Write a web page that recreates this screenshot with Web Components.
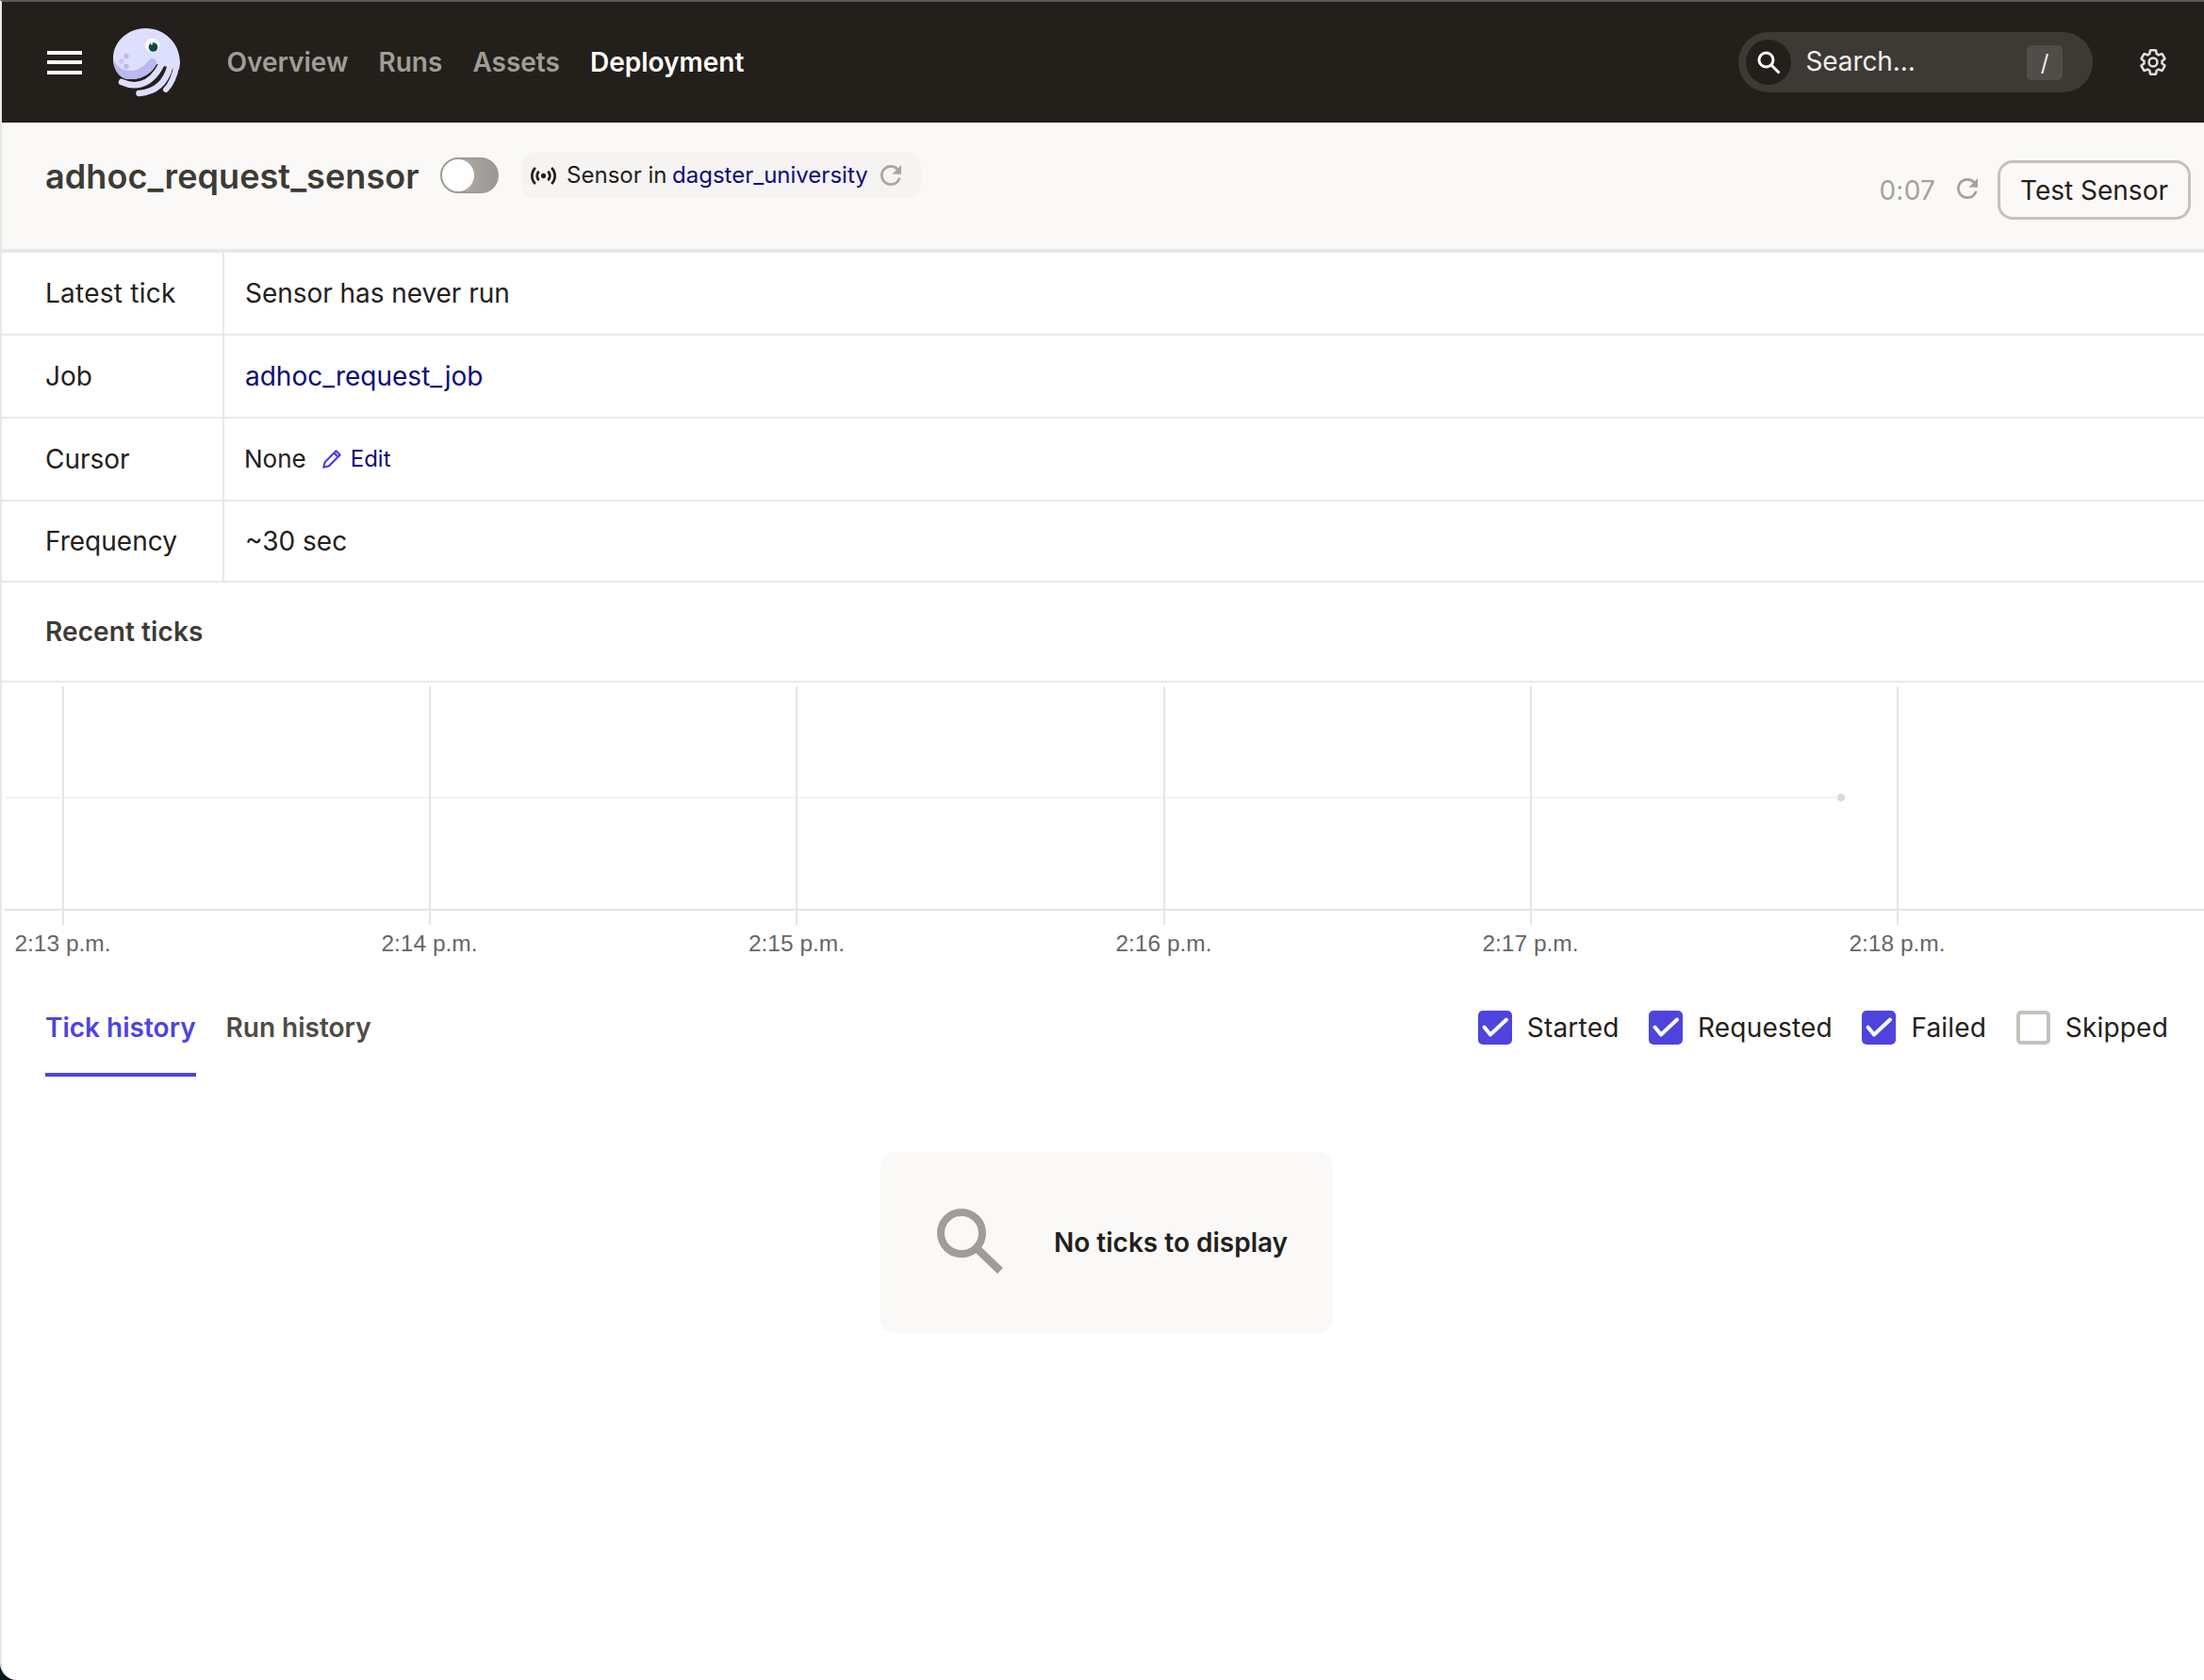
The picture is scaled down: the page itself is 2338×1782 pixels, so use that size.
<!DOCTYPE html>
<html><head><meta charset="utf-8"><title>adhoc_request_sensor</title>
<style>
html,body{margin:0;padding:0;background:#04191c;height:100%;}
body{font-family:Inter,"Noto Sans",sans-serif;font-size:28px;color:#23201b;overflow:hidden;}
</style></head><body>
<app-frame>
  <top-nav></top-nav>
  <page-header></page-header>
  <meta-table></meta-table>
  <section-title>Recent ticks</section-title>
  <tick-chart></tick-chart>
  <tick-tabs></tick-tabs>
  <empty-card>No ticks to display</empty-card>
</app-frame>
<script>
function def(name, html){
  customElements.define(name, class extends HTMLElement{
    constructor(){super();this.attachShadow({mode:'open'}).innerHTML=html;}
  });
}
const REFRESH='M17.65 6.35A7.958 7.958 0 0 0 12 4c-4.42 0-7.99 3.58-7.99 8s3.57 8 7.99 8c3.73 0 6.84-2.55 7.73-6h-2.08A5.99 5.99 0 0 1 12 18c-3.31 0-6-2.69-6-6s2.69-6 6-6c1.66 0 3.14.69 4.22 1.78L13 11h7V4l-2.35 2.35z';
def('app-frame',`<style>:host{display:block;box-sizing:border-box;width:2338px;height:1782px;background:#fff;border-top:2px solid #5c5a5a;border-left:2px solid #e8e8e8;border-bottom-left-radius:18px;overflow:hidden;}</style><slot></slot>`);
def('icon-logo',`<style>:host{display:block;width:72px;height:74px;flex:none;}svg{display:block;width:100%;height:100%}</style>
<svg viewBox="20 20 72 74" fill="none">
<path d="M54 20C75 20 91 36 91 57L90 64 66 58C62 66 52 75 36 74 26 73 20 63 20 52 20 34 36 20 54 20Z" fill="#dedeff"/>
<path d="M20 52C20 63 26 73 36 74 52 75 62 66 66 58 67 54 63 50 59 53 54 58 50 64 40 65 30 66 23 60 20 52Z" fill="#bcb8f0"/>
<path d="M29 77C40 82 58 84 71 59" stroke="#dedeff" stroke-width="6.500" stroke-linecap="round"/>
<path d="M47.500 89C60 88 75 82 80.500 60" stroke="#dedeff" stroke-width="6.500" stroke-linecap="round"/>
<path d="M76 85C81 80 86 70 87 60" stroke="#dedeff" stroke-width="6" stroke-linecap="round"/>
<ellipse cx="61.500" cy="38" rx="7.800" ry="7.200" fill="#fff"/><circle cx="62.500" cy="40" r="4.800" fill="#0f4a48"/><circle cx="61" cy="36.500" r="1.100" fill="#fff"/>
<circle cx="34" cy="49.500" r="2.700" fill="#bcb8f0"/><circle cx="29" cy="55" r="2.700" fill="#c9c6f5"/><circle cx="34" cy="60.500" r="2.700" fill="#bcb8f0"/></svg>`);
def('top-nav',`<style>
:host{display:flex;align-items:center;height:128px;background:#23201b;margin-left:-2px;border-left:2px solid #5c5a5a;box-sizing:border-box;font-family:Inter,sans-serif;}
.burger{display:flex;flex-direction:column;gap:6.500px;margin-left:48px;width:37px;flex:none;}
.burger i{display:block;height:4px;background:#fff;}
icon-logo{margin-left:33px;margin-top:2px}
nav{display:flex;gap:32px;margin-left:48.500px;font-size:28px;font-weight:600;color:#a19d98;}
nav span{white-space:nowrap}
nav .on{color:#fff}
.sp{flex:1}
.search{display:flex;align-items:center;width:376px;height:64px;border-radius:32px;background:#3d3a35;box-sizing:border-box;padding-left:8px;color:#f0efed;font-size:28px;}
.circle{width:48px;height:48px;border-radius:50%;background:#23201b;display:flex;align-items:center;justify-content:center;flex:none;}
.txt{margin-left:15.500px;flex:1;margin-top:-2px;letter-spacing:-.1px}
.key{width:38px;height:37px;border-radius:5px;background:#514d48;display:flex;align-items:center;justify-content:center;margin-right:32px;font-size:24px;font-weight:400}
.gear{margin-left:50px;margin-right:40px;width:28px;height:28px;display:block;margin-top:-1px;flex:none}
</style>
<div class="burger"><i></i><i></i><i></i></div>
<icon-logo></icon-logo>
<nav><span>Overview</span><span>Runs</span><span>Assets</span><span class="on">Deployment</span></nav>
<div class="sp"></div>
<div class="search"><div class="circle"><svg width="28" height="28" viewBox="0 0 28 28" fill="none" stroke="#fff" stroke-width="3"><circle cx="11.500" cy="11.500" r="7.500"/><path d="M17 17l8.500 8.500"/></svg></div><div class="txt">Search...</div><div class="key">/</div></div>
<svg class="gear" viewBox="1 1 22 22" fill="none" stroke="#e2e0dc" stroke-width="2" stroke-linejoin="round"><path d="M19.430 12.980c.04-.32.07-.64.07-.98 0-.34-.03-.66-.07-.98l2.110-1.650c.19-.15.24-.42.12-.64l-2-3.460c-.12-.22-.39-.3-.61-.22l-2.490 1c-.52-.4-1.080-.73-1.690-.98l-.38-2.650C14.460 2.180 14.250 2 14 2h-4c-.25 0-.46.18-.49.42l-.38 2.650c-.61.25-1.170.59-1.690.98l-2.490-1c-.23-.09-.49 0-.61.22l-2 3.460c-.13.22-.07.49.12.64l2.110 1.650c-.04.32-.07.65-.07.98 0 .33.03.66.07.98l-2.110 1.650c-.19.15-.24.42-.12.64l2 3.460c.12.22.39.3.61.22l2.490-1c.52.4 1.080.73 1.690.98l.38 2.650c.03.24.24.42.49.42h4c.25 0 .46-.18.49-.42l.38-2.650c.61-.25 1.170-.59 1.690-.98l2.490 1c.23.09.49 0 .61-.22l2-3.460c.12-.22.07-.49-.12-.64l-2.110-1.650z"/><circle cx="12" cy="12" r="3.500"/></svg>`);
def('page-header',`<style>
:host{display:flex;align-items:flex-start;height:138px;box-sizing:border-box;background:#faf9f7;border-bottom:4px solid #e8e8e8;font-family:Inter,sans-serif;}
h1{margin:0;margin-left:46px;margin-top:33px;font-size:36px;line-height:48px;font-weight:600;color:#3d3a36;white-space:nowrap;letter-spacing:.07px}
.toggle{box-sizing:border-box;width:62px;height:38px;border-radius:19px;background:linear-gradient(90deg,#b8b5b0,#9a9691);border:2px solid #9e9a95;margin-left:22.500px;margin-top:37px;flex:none}
.toggle i{display:block;width:34px;height:34px;border-radius:50%;background:#fff}
.tag{display:flex;align-items:center;height:48px;background:#f5f4f2;border-radius:14px;margin-left:23.500px;margin-top:32px;padding:0 21px 0 10px;font-size:24px;color:#23201b;white-space:nowrap}
.tag a,.tag span{position:relative;top:-1px}
.tag a{color:#0c0c7a;margin-left:5.500px}
.tag svg{flex:none;display:block}
.sp{flex:1}
.right{display:flex;align-items:center;margin-top:40px;margin-right:14px}
.t{font-size:28px;color:#a5a29d;letter-spacing:.2px}
.rf{margin-left:23px;margin-right:21px;margin-top:-3px;display:block}
button{font:400 28px Inter,sans-serif;color:#23201b;background:transparent;box-sizing:border-box;height:63px;width:205px;border:3px solid #c4c1bc;border-radius:16px;padding:0;}
</style>
<h1>adhoc_request_sensor</h1><div class="toggle"><i></i></div>
<div class="tag"><svg width="27" height="19" viewBox="2 4.900 20 14.200" preserveAspectRatio="none" fill="#23201b"><path d="M7.760 16.240C6.670 15.160 6 13.660 6 12s.67-3.160 1.760-4.240l1.420 1.420C8.450 9.900 8 10.900 8 12c0 1.100.45 2.100 1.170 2.830l-1.410 1.410zm8.480 0C17.330 15.160 18 13.660 18 12s-.67-3.160-1.760-4.240l-1.420 1.420C15.550 9.900 16 10.900 16 12c0 1.100-.45 2.100-1.170 2.830l1.410 1.410zM12 10c-1.100 0-2 .9-2 2s.9 2 2 2 2-.9 2-2-.9-2-2-2zm8 2c0 2.210-.9 4.210-2.350 5.650l1.420 1.420C20.880 17.260 22 14.760 22 12s-1.120-5.260-2.930-7.070l-1.420 1.420C19.100 7.790 20 9.790 20 12zM6.350 6.350L4.930 4.930C3.120 6.740 2 9.240 2 12s1.120 5.260 2.930 7.070l1.420-1.420C4.900 16.210 4 14.210 4 12s.9-4.210 2.350-5.650z"/></svg>
<span style="margin-left:11.500px">Sensor in</span><a>dagster_university</a>
<svg style="margin-left:13px" width="22" height="22" viewBox="4 4 16 16" fill="#a9a6a1"><path d="${REFRESH}"/></svg></div>
<div class="sp"></div>
<div class="right"><span class="t">0:07</span><svg class="rf" width="22" height="22" viewBox="4 4 16 16" fill="#a5a29d"><path d="${REFRESH}"/></svg><button>Test Sensor</button></div>`);
def('meta-row',`<style>
:host{display:grid;grid-template-columns:236px 1fr;height:88px;box-sizing:border-box;border-bottom:2px solid #e8e8e8;font-size:28px;color:#23201b;}
.k{padding-left:46px;border-right:2px solid #e8e8e8;display:flex;align-items:center;}
.v{padding-left:22px;display:flex;align-items:center;}
</style><div class="k"><slot name="k"></slot></div><div class="v"><slot></slot></div>`);
def('edit-link',`<style>:host{display:inline-flex;align-items:center;color:#0c0c7a;font-size:24px;margin-left:17.500px;margin-top:-2px}svg{margin-right:8.500px;display:block}</style>
<svg width="21" height="21" viewBox="0 0 20 20" fill="none" stroke="#4f43dd" stroke-width="2.100" stroke-linejoin="round"><path d="M1.200 18.800l1.300-5.300L13.800 2.200l4 4L6.500 17.500z"/><path d="M11.800 4.200l4 4"/></svg><slot></slot>`);
def('meta-table',`<style>:host{display:block;font-family:Inter,sans-serif}a{color:#0c0c7a}.n{font-size:26px;margin-left:-1px;margin-top:-2px}</style>
<meta-row><span slot="k" style="letter-spacing:.25px">Latest tick</span><span style="letter-spacing:-.05px;margin-top:-1px">Sensor has never run</span></meta-row>
<meta-row><span slot="k">Job</span><a>adhoc_request_job</a></meta-row>
<meta-row><span slot="k">Cursor</span><span class="n">None</span><edit-link>Edit</edit-link></meta-row>
<meta-row style="height:86px"><span slot="k">Frequency</span>~30 sec</meta-row>`);
def('section-title',`<style>:host{display:flex;align-items:center;height:106px;box-sizing:border-box;border-bottom:2px solid #e8e8e8;padding-left:46px;font-size:28px;font-weight:600;color:#3d3a36;font-family:Inter,sans-serif;letter-spacing:.1px}</style><slot></slot>`);
def('tick-chart',`<style>:host{display:block;height:304px;}svg{display:block}text{font:24.500px "Liberation Sans",Arial,sans-serif;fill:#666;text-anchor:middle}</style>
<svg width="2336" height="304" viewBox="2 724 2336 304" fill="none">
<path d="M6 846H1953" stroke="#f3f3f3" stroke-width="2"/>
<path d="M5 965H2338" stroke="#e5e5e5" stroke-width="2"/>
<path stroke="#e5e5e5" stroke-width="2" d="M67 728V981M456 728V981M845 728V981M1235 728V981M1624 728V981M2013 728V981"/>
<circle cx="1953" cy="846" r="4" fill="#dad9d8"/>
<text x="66.500" y="1008.500">2:13 p.m.</text><text x="455.500" y="1008.500">2:14 p.m.</text><text x="845" y="1008.500">2:15 p.m.</text><text x="1234.500" y="1008.500">2:16 p.m.</text><text x="1623.500" y="1008.500">2:17 p.m.</text><text x="2012.500" y="1008.500">2:18 p.m.</text>
</svg>`);
def('check-box',`<style>:host{display:inline-flex;align-items:center;font-size:28px;color:#23201b;gap:16px;white-space:nowrap;letter-spacing:.2px}
.b{box-sizing:border-box;width:36px;height:36px;border-radius:5px;background:#4f43dd;display:block;flex:none}
:host([off]) .b{background:#fff;border:4px solid #c4c1bc}
:host([off]) svg{display:none}
svg{display:block}</style>
<span class="b"><svg width="36" height="36" viewBox="0 0 36 36" fill="none" stroke="#fff" stroke-width="4" stroke-linecap="round" stroke-linejoin="round"><path d="M6.500 17.500L13 25.500 30 9.500"/></svg></span><slot></slot>`);
def('tick-tabs',`<style>:host{display:flex;align-items:flex-start;height:114px;box-sizing:border-box;font-family:Inter,sans-serif;padding-left:46px;padding-right:38px;}
.tab{font-size:28px;font-weight:600;color:#4f4b45;height:114px;box-sizing:border-box;padding-top:44.500px;line-height:34px;white-space:nowrap;margin-right:31.500px}
.tab.on{color:#4f43dd;border-bottom:4px solid #4f43dd;min-width:160px;}
.sp{flex:1}.checks{display:flex;gap:31.500px;margin-top:44px;height:36px}</style>
<div class="tab on">Tick history</div><div class="tab">Run history</div><div class="sp"></div>
<div class="checks"><check-box>Started</check-box><check-box>Requested</check-box><check-box>Failed</check-box><check-box off>Skipped</check-box></div>`);
def('empty-card',`<style>:host{display:flex;align-items:center;width:480px;height:192px;box-sizing:border-box;margin:80px 0 0 932px;background:#faf9f7;border-radius:16px;font-family:Inter,sans-serif;font-size:28px;font-weight:600;color:#23201b;white-space:nowrap;padding-left:56px;gap:52px}svg{display:block;flex:none}</style>
<svg width="76" height="72" viewBox="0 0 76 72" fill="none" stroke="#a09d99" stroke-width="8"><circle cx="30" cy="26" r="22"/><path d="M46 42l25 24" stroke-width="8.500"/></svg><span><slot></slot></span>`);
</script>
</body></html>
